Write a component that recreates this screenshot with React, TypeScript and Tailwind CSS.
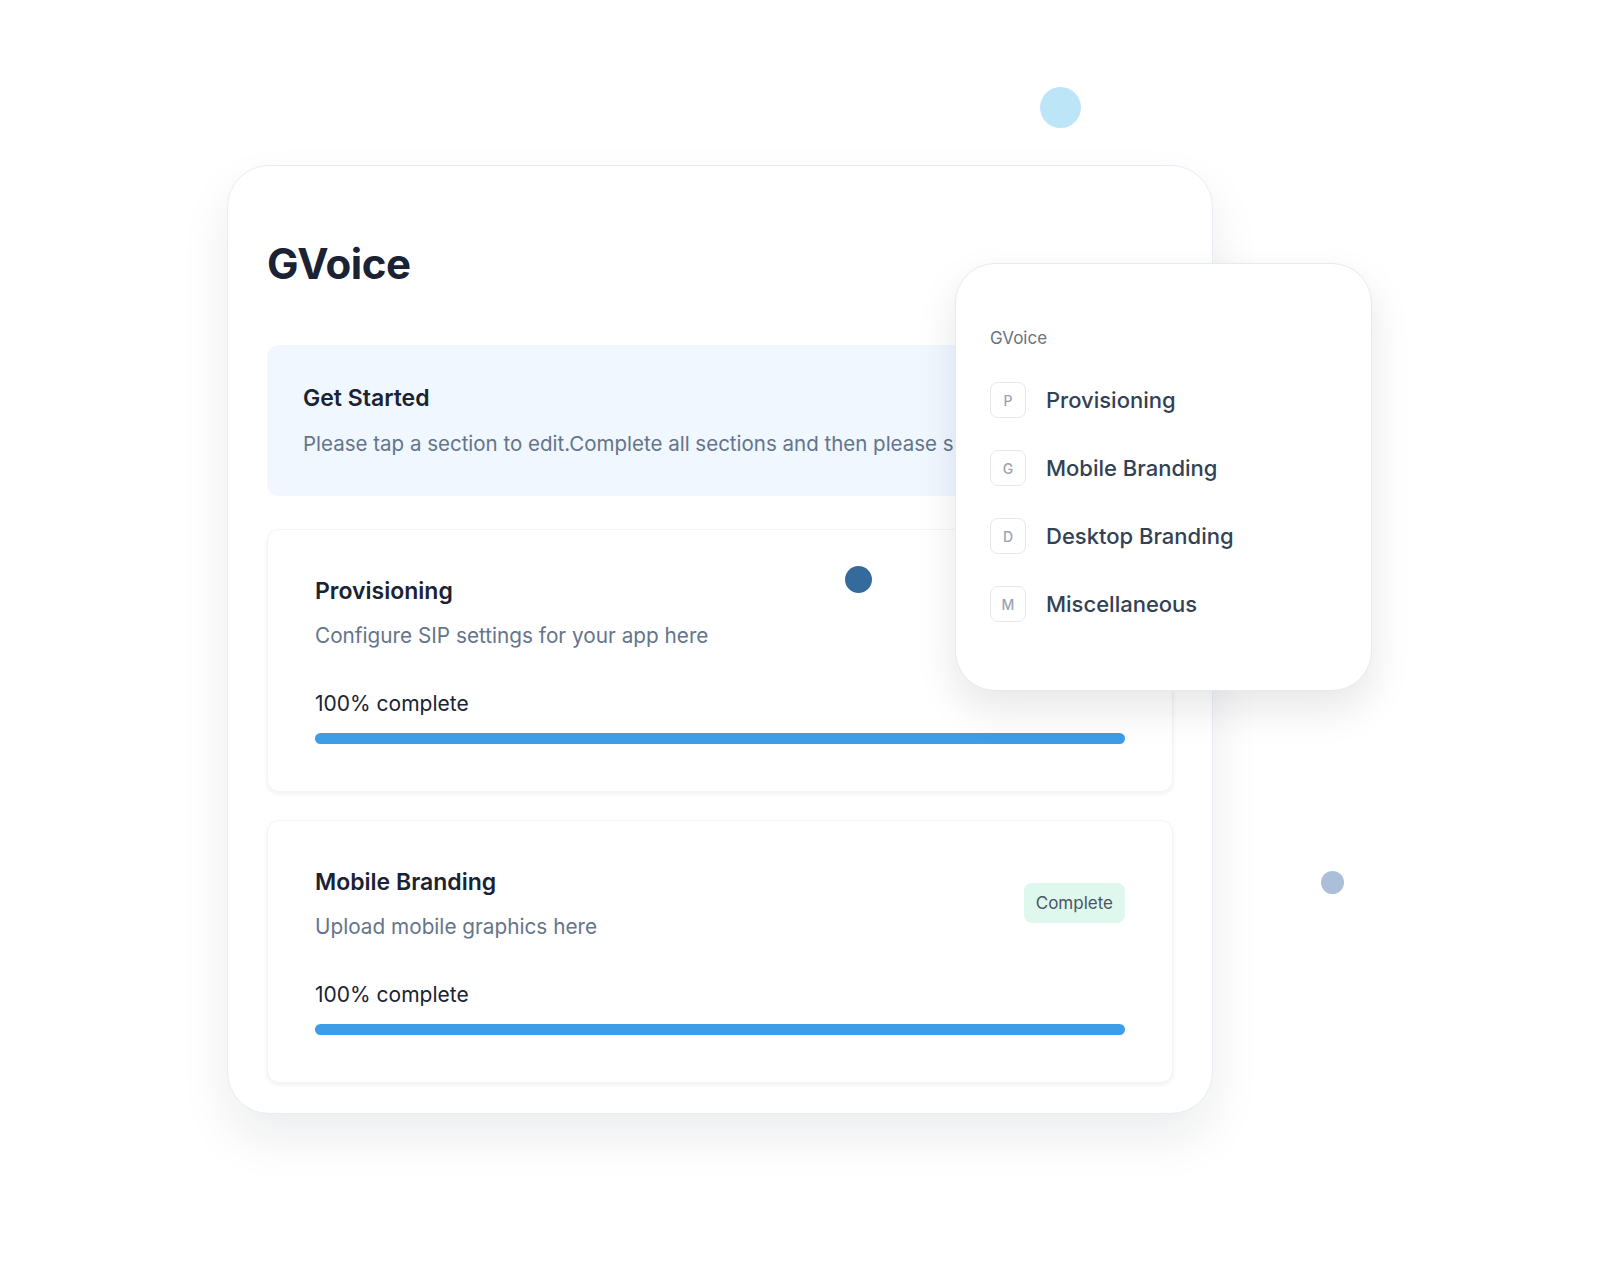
import React from 'react';

const font = { fontFamily: 'Inter, "Noto Sans", sans-serif' };

const sections = [
  { title: 'Provisioning', desc: 'Configure SIP settings for your app here', pct: 100, done: false },
  { title: 'Mobile Branding', desc: 'Upload mobile graphics here', pct: 100, done: true },
];

const menu = [
  { letter: 'P', label: 'Provisioning' },
  { letter: 'G', label: 'Mobile Branding' },
  { letter: 'D', label: 'Desktop Branding' },
  { letter: 'M', label: 'Miscellaneous' },
];

function SectionCard({ title, desc, pct, done }: (typeof sections)[number]) {
  return (
    <div className="rounded-xl border border-gray-100 bg-white px-[47px] pt-[45px] pb-[47px] shadow-[0_2px_4px_rgba(15,23,42,0.06)]">
      <div className="flex items-start justify-between">
        <div>
          <h3 className="text-[23px] font-semibold leading-8 text-[#1a2233]">{title}</h3>
          <p className="mt-[15px] text-[20.75px] leading-7 text-[#64748b]">{desc}</p>
        </div>
        {done && (
          <span className="mt-[17px] rounded-lg bg-[#dff8ee] px-3 py-[9px] text-[17px] leading-[22px] text-[#4b5563]">
            Complete
          </span>
        )}
      </div>
      <p className="mt-10 text-[21px] leading-7 text-[#1a2233]">{pct}% complete</p>
      <div className="mt-[15px] h-[11px] w-full rounded-full bg-gray-100">
        <div className="h-full rounded-full bg-[#3d9de6]" style={{ width: `${pct}%` }} />
      </div>
    </div>
  );
}

export default function App() {
  return (
    <div className="relative h-[1280px] w-[1600px] overflow-hidden bg-white" style={font}>
      {/* decorative dots */}
      <div className="absolute left-[1040px] top-[87px] h-[41px] w-[41px] rounded-full bg-[#bde5f8]" />
      <div className="absolute left-[1321px] top-[871px] h-[23px] w-[23px] rounded-full bg-[#abbfd8]" />

      <div className="pl-[227px] pt-[165px]">
        <div className="w-[986px] rounded-[42px] border border-[#e8edf3] bg-white px-[39px] pt-[72px] pb-[30px] shadow-[0_24px_50px_rgba(15,23,42,0.08)]">
          <h1 className="text-[42px] font-bold leading-[52px] tracking-[-0.01em] text-[#1a2233]">GVoice</h1>

          <div className="mt-[55px] rounded-xl bg-[#f0f7ff] px-9 pt-[37px] pb-[38px]">
            <h2 className="text-[23px] font-semibold leading-8 text-[#1a2233]">Get Started</h2>
            <p className="mt-4 whitespace-nowrap text-[20.5px] leading-7 text-[#64748b]">
              Please tap a section to edit.Complete all sections and then please submit.
            </p>
          </div>

          <div className="mt-[33px] flex flex-col gap-7">
            {sections.map((s) => (
              <SectionCard key={s.title} {...s} />
            ))}
          </div>
        </div>
      </div>

      <div className="absolute left-[845px] top-[566px] h-[27px] w-[27px] rounded-full bg-[#356a9c]" />

      {/* floating section navigator */}
      <div className="absolute left-[955px] top-[263px] h-[428px] w-[417px] rounded-[40px] border border-[#e5eaf0] bg-white px-[34px] pt-[62px] shadow-[0_18px_40px_rgba(15,23,42,0.10)]">
        <p className="text-[17px] leading-6 text-[#6b7280]">GVoice</p>
        <ul className="mt-[32px] flex flex-col gap-[32px]">
          {menu.map((m) => (
            <li key={m.letter} className="flex items-center gap-5">
              <span className="flex h-9 w-9 items-center justify-center rounded-lg border border-[#e5e7eb] text-[14px] font-medium text-[#9ca3af]">
                {m.letter}
              </span>
              <span className="text-[22px] font-medium text-[#334155]">{m.label}</span>
            </li>
          ))}
        </ul>
      </div>
    </div>
  );
}
